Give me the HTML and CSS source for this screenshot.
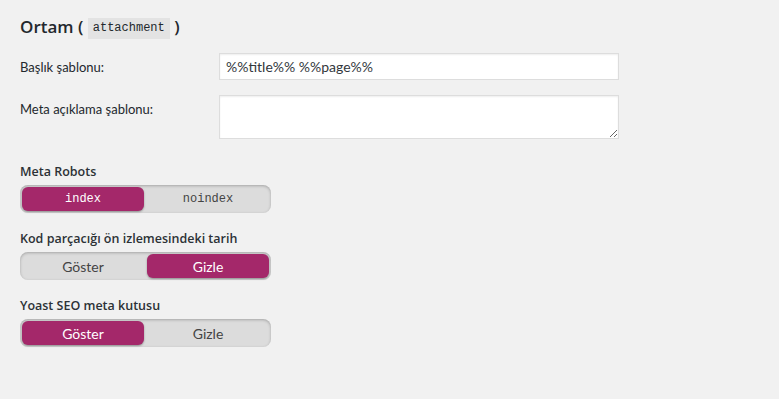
FILE: index.html
```html
<!DOCTYPE html>
<html lang="tr">
<head>
<meta charset="utf-8">
<title>Ortam</title>
<link rel="stylesheet" href="styles.css">
</head>
<body>
<div class="page">
  <h2 class="title">Ortam ( <code class="code">attachment</code> )</h2>
  <div class="fields">
    <div class="row">
      <label class="row-label" for="t1">Başlık şablonu:</label>
      <input class="text-input" id="t1" type="text" value="%%title%% %%page%%">
    </div>
    <div class="row row-area">
      <label class="row-label" for="t2">Meta açıklama şablonu:</label>
      <textarea class="text-area" id="t2"></textarea>
    </div>
  </div>

  <div class="group">
    <div class="group-label">Meta Robots</div>
    <div class="toggle">
      <span class="opt opt-mono active">index</span>
      <span class="opt opt-mono">noindex</span>
    </div>
  </div>

  <div class="group">
    <div class="group-label">Kod parçacığı ön izlemesindeki tarih</div>
    <div class="toggle">
      <span class="opt">Göster</span>
      <span class="opt active">Gizle</span>
    </div>
  </div>

  <div class="group">
    <div class="group-label">Yoast SEO meta kutusu</div>
    <div class="toggle">
      <span class="opt active">Göster</span>
      <span class="opt">Gizle</span>
    </div>
  </div>
</div>
</body>
</html>
```

FILE: styles.css
```css
html, body {
  margin: 0;
  background: #f1f1f1;
}
body {
  font-family: Lato, "Noto Sans", sans-serif;
  font-size: 13px;
  color: #444;
}
.page {
  padding: 14px 20px 20px;
}
.title {
  margin: 0;
  font-family: "Open Sans", Lato, sans-serif;
  font-size: 17px;
  line-height: 25px;
  font-weight: 600;
  color: #23282d;
}
.code {
  font-family: "Liberation Mono", "DejaVu Sans Mono", monospace;
  font-size: 12px;
  font-weight: 400;
  background: #e3e3e3;
  padding: 3px 5px 4px;
  color: #23282d;
  vertical-align: 2px;
}
.fields {
  margin-top: 12px;
}
.row {
  display: grid;
  grid-template-columns: 199px 400px;
  align-items: start;
}
.row-area {
  margin-top: 15px;
}
.row-label {
  padding-top: 5px;
  line-height: 18px;
  color: #23282d;
}
.text-input, .text-area {
  box-sizing: border-box;
  width: 400px;
  margin: 0;
  border: 1px solid #ddd;
  background: #fff;
  box-shadow: inset 0 1px 2px rgba(0,0,0,.07);
  font-family: Lato, "Noto Sans", sans-serif;
  font-size: 14px;
  color: #32373c;
  outline: none;
}
.text-input {
  height: 27px;
  padding: 0 6px;
}
.text-area {
  height: 44px;
  display: block;
}
.group {
  margin-top: 24px;
}
.group + .group {
  margin-top: 17px;
}
.group-label {
  font-family: "Open Sans", Lato, sans-serif;
  font-weight: 600;
  font-size: 12.5px;
  line-height: 18px;
  color: #2c3136;
}
.toggle {
  margin-top: 4px;
  box-sizing: border-box;
  width: 251px;
  height: 28px;
  padding: 2px 2px;
  border-radius: 8px;
  background: #dcdcdc;
  box-shadow: inset 0 1px 3px rgba(0,0,0,.25);
  display: grid;
  grid-template-columns: 1fr 1fr;
  column-gap: 3px;
}
.opt {
  display: flex;
  align-items: center;
  justify-content: center;
  border-radius: 6px;
  font-size: 14px;
  color: #444;
}
.opt-mono {
  font-family: "Liberation Mono", "DejaVu Sans Mono", monospace;
  font-size: 12px;
}
.active {
  background: #a4286a;
  color: #fff;
  box-shadow: 0 1px 2px rgba(0,0,0,.35);
}
```
